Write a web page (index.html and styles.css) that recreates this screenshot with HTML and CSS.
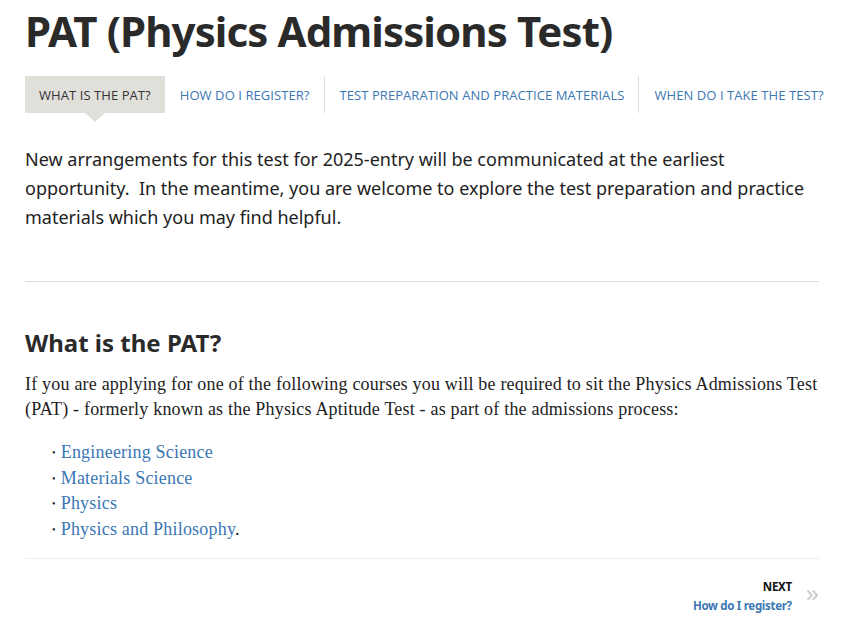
FILE: index.html
```html
<!DOCTYPE html>
<html lang="en">
<head>
<meta charset="utf-8">
<title>PAT (Physics Admissions Test)</title>
<link rel="stylesheet" href="styles.css">
</head>
<body>
<main class="page">
  <h1 class="title">PAT (Physics Admissions Test)</h1>
  <nav class="tabs">
    <a class="tab active" href="#">What is the PAT?</a>
    <a class="tab" href="#">How do I register?</a>
    <a class="tab sep" href="#">Test preparation and practice materials</a>
    <a class="tab sep" href="#">When do I take the test?</a>
  </nav>
  <p class="intro">New arrangements for this test for 2025-entry will be communicated at the earliest opportunity.&nbsp; In the meantime, you are welcome to explore the test preparation and practice materials which you may find helpful.</p>
  <hr class="rule">
  <h2 class="heading">What is the PAT?</h2>
  <p class="body">If you are applying for one of the following courses you will be required to sit the Physics Admissions Test (PAT) - formerly known as the Physics Aptitude Test - as part of the admissions process:</p>
  <ul class="courses">
    <li><a href="#">Engineering Science</a></li>
    <li><a href="#">Materials Science</a></li>
    <li><a href="#">Physics</a></li>
    <li><a href="#">Physics and Philosophy</a>.</li>
  </ul>
  <hr class="rule thin">
  <div class="pager">
    <div class="pager-text">
      <span class="pager-label">NEXT</span>
      <a class="pager-link" href="#">How do I register?</a>
    </div>
    <span class="pager-arrow">&raquo;</span>
  </div>
</main>
</body>
</html>
```
FILE: styles.css
```css
html, body { margin: 0; padding: 0; background: #fff; }
.page {
  width: 794px;
  padding: 0 25px;
  color: #222;
  font-family: "Noto Sans", "Open Sans", sans-serif;
}
.title {
  margin: 0;
  padding-top: 3px;
  font-family: "Noto Sans", sans-serif;
  font-weight: 700;
  font-size: 42px;
  line-height: 56px;
  letter-spacing: -0.9px;
  color: #2a2a2a;
}
.tabs {
  display: flex;
  margin-top: 17px;
  height: 37px;
}
.tab {
  position: relative;
  display: flex;
  align-items: center;
  flex-shrink: 0;
  white-space: nowrap;
  padding: 0 14px 0 15px;
  font-family: "Open Sans", sans-serif;
  font-size: 13px;
  letter-spacing: 0.07px;
  text-transform: uppercase;
  text-decoration: none;
  color: #3a77b3;
}
.tab.sep { border-left: 1px solid #ddd; }
.tab.active {
  background: #e0dfda;
  color: #333;
  padding: 0 14px;
}
.tab.active::after {
  content: "";
  position: absolute;
  left: 50%;
  top: 100%;
  margin-left: -10px;
  border-left: 10px solid transparent;
  border-right: 10px solid transparent;
  border-top: 9px solid #e0dfda;
}
.intro {
  margin: 32px 0 0;
  font-family: "Noto Sans", sans-serif;
  font-size: 18px;
  line-height: 29px;
  letter-spacing: 0;
  color: #222;
}
.rule {
  margin: 49px 0 0;
  border: 0;
  border-top: 1px solid #ddd;
}
.heading {
  margin: 46px 0 0;
  font-family: "Noto Sans", sans-serif;
  font-size: 24px;
  line-height: 30px;
  font-weight: 700;
  color: #2a2a2a;
}
.body {
  margin: 14px 0 0;
  font-family: "Liberation Serif", serif;
  font-size: 18px;
  letter-spacing: 0.2px;
  line-height: 25px;
  color: #222;
}
.courses {
  list-style: none;
  margin: 18px 0 0;
  padding: 0 0 0 27px;
  font-family: "Liberation Serif", serif;
  font-size: 18px;
  letter-spacing: 0.2px;
  line-height: 25.5px;
}
.courses li::before {
  content: "\2022";
  font-size: 10px;
  margin-right: 5px;
  vertical-align: 2px;
}
.courses a { color: #3a77b3; text-decoration: none; }
.rule.thin { margin-top: 16px; border-top-color: #eee; }
.pager {
  display: flex;
  justify-content: flex-end;
  align-items: center;
  gap: 14px;
  margin-top: 18px;
}
.pager-text {
  display: flex;
  flex-direction: column;
  align-items: flex-end;
  font-family: "Noto Sans", sans-serif;
  font-size: 11.5px;
  line-height: 19px;
  font-weight: 700;
  letter-spacing: -0.3px;
}
.pager-label { color: #111; }
.pager-link { color: #3a77b3; text-decoration: none; }
.pager-arrow {
  font-size: 26px;
  color: #ccc;
  line-height: 1;
  margin-top: -8px;
}
```
